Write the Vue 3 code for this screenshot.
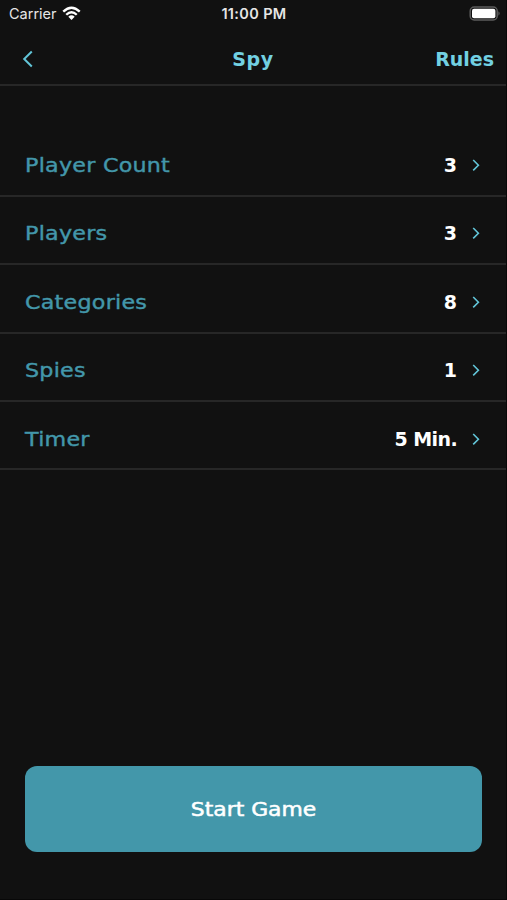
<template>
  <div class="screen">
    <div class="status">
      <div class="carrier">
        <span>Carrier</span>
        <svg class="wifi" viewBox="0 0 20 16">
          <path d="M1.2 6 Q10 -2.4 18.8 6" />
          <path d="M4.4 9.3 Q10 3.9 15.6 9.3" />
          <path class="dot" d="M6.6 11.5 Q10 8.4 13.4 11.5 L10 15 Z" />
        </svg>
      </div>
      <span class="time">11:00 PM</span>
      <svg class="battery" viewBox="0 0 32 16">
        <rect class="shell" x="1.2" y="1" width="27" height="13" rx="4" />
        <rect class="level" x="3" y="2.8" width="23.4" height="9.4" rx="2" />
        <path class="cap" d="M29.4 5.3 Q32 7.5 29.4 9.7 Z" />
      </svg>
    </div>
    <header class="nav">
      <svg class="back" viewBox="0 0 12 18">
        <path d="M9.8 1.5 L2.2 9 L9.8 16.5" />
      </svg>
      <h1 class="title">Spy</h1>
      <a class="rules">Rules</a>
    </header>
    <ul class="list">
      <li v-for="item in list" :key="item.name" class="row">
        <span class="name">{{ item.name }}</span>
        <span class="value" :class="{ long: item.value.length > 1 }">{{ item.value }}</span>
        <svg class="arrow" viewBox="0 0 8 14">
          <path d="M1.2 2 L6.4 7.2 L1.2 12.4" />
        </svg>
      </li>
    </ul>
    <button class="start"><span class="label">Start Game</span></button>
  </div>
</template>
<script setup>
import { ref } from 'vue'

const list = ref([
  { name: 'Player Count', value: '3' },
  { name: 'Players', value: '3' },
  { name: 'Categories', value: '8' },
  { name: 'Spies', value: '1' },
  { name: 'Timer', value: '5 Min.' }
])
</script>
<style>
body {
  background: #111111;
}
</style>
<style scoped>
.screen {
  box-sizing: border-box;
  display: flex;
  flex-direction: column;
  width: 507px;
  height: 900px;
  background: #111111;
  border-right: 1px solid #080808;
  border-bottom: 1px solid #080808;
  font-family: "DejaVu Sans", sans-serif;
  font-size: 19px;
  overflow: hidden;
}
.status {
  display: grid;
  grid-template-columns: 1fr auto 1fr;
  align-items: center;
  height: 27px;
  padding: 0 5px 0 7px;
  box-sizing: border-box;
  color: #e6e6e6;
  font-family: Inter, sans-serif;
  font-size: 14.5px;
}
.carrier {
  display: flex;
  align-items: center;
  gap: 5px;
  padding-left: 2px;
}
.wifi {
  width: 19px;
  height: 15px;
  fill: none;
  stroke: #ffffff;
  stroke-width: 2.5;
}
.wifi .dot {
  fill: #ffffff;
  stroke: none;
}
.time {
  font-weight: 600;
  letter-spacing: 0.35px;
}
.battery {
  justify-self: end;
  width: 32px;
  height: 16px;
}
.shell {
  fill: none;
  stroke: #5c5c5c;
  stroke-width: 1.5;
}
.level {
  fill: #ffffff;
}
.cap {
  fill: #5c5c5c;
}
.nav {
  display: grid;
  grid-template-columns: 1fr auto 1fr;
  align-items: center;
  height: 59px;
  padding: 7px 12px 0;
  box-sizing: border-box;
  border-bottom: 2px solid #272727;
  color: #72d0e2;
}
.back {
  width: 12px;
  height: 18px;
  margin-left: 10px;
  fill: none;
  stroke: #62c5d8;
  stroke-width: 2;
}
.title {
  margin: 0;
  font-size: 19px;
  font-weight: 700;
  letter-spacing: 0.6px;
}
.rules {
  justify-self: end;
  font-weight: 700;
}
.list {
  list-style: none;
  margin: 0;
  padding: 42.2px 0 0;
}
.row {
  display: flex;
  align-items: center;
  height: 68.45px;
  padding: 7px 26px 0 25px;
  box-sizing: border-box;
  border-bottom: 2px solid #272727;
}
/* wide lettering */
.name {
  margin-right: auto;
  color: #4397aa;
  letter-spacing: 0.2px;
  transform: scaleX(1.17);
  transform-origin: left;
  -webkit-text-stroke: 0.4px #4397aa;
}
.value {
  color: #ffffff;
  font-weight: 700;
}
.value.long {
  letter-spacing: -0.6px;
}
.arrow {
  width: 8px;
  height: 14px;
  margin-left: 15px;
  fill: none;
  stroke: #62c5d8;
  stroke-width: 1.6;
}
.start {
  height: 86px;
  margin: auto 24px 47px 25px;
  border: none;
  border-radius: 12px;
  background: #4397aa;
  color: #ffffff;
  font-family: inherit;
  font-size: 19px;
}
.label {
  display: inline-block;
  transform: scaleX(1.15);
  -webkit-text-stroke: 0.5px #ffffff;
}
</style>
